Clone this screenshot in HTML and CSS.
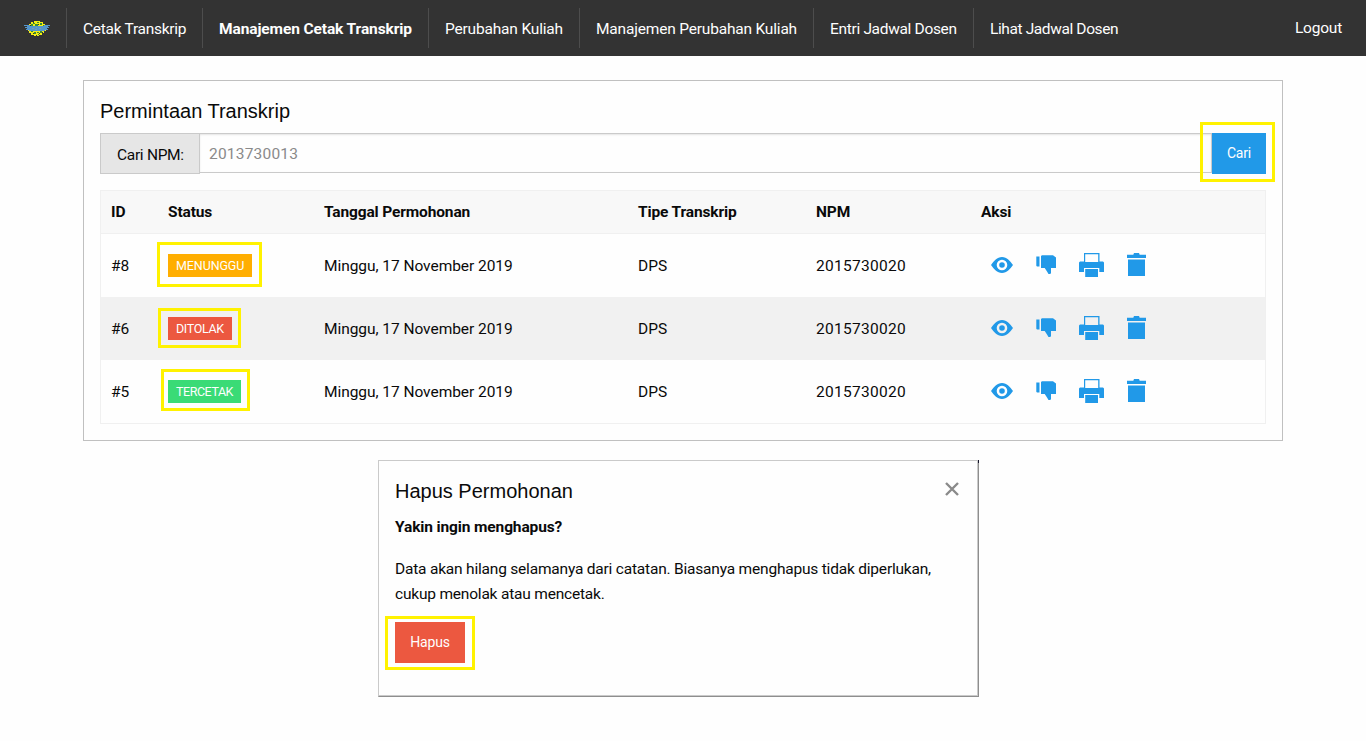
FILE: index.html
```html
<!DOCTYPE html>
<html lang="id">
<head>
<meta charset="utf-8">
<title>Manajemen Cetak Transkrip</title>
<link rel="stylesheet" href="styles.css">
</head>
<body>
<svg class="defs" aria-hidden="true">
  <symbol id="eye" viewBox="0 0 22 16"><path fill-rule="evenodd" d="M0 8C3 4 6 0 11 0s8 4 11 8c-3 4-6 8-11 8S3 12 0 8Zm11-5.300a5.300 5.300 0 1 0 0 10.600a5.300 5.300 0 0 0 0-10.600Zm0 2.500a2.800 2.800 0 1 1 0 5.600a2.800 2.800 0 0 1 0-5.600Z"/></symbol>
  <symbol id="thumb" viewBox="0 0 20 19"><path d="M.3 1.500H3.500V11.500H1L.3 10.800ZM5 1 6 .2H17L20 2.600V13h-5v5l-.7 1h-1.800L11 16.500 8.700 13H5Z"/></symbol>
  <symbol id="printer" viewBox="0 0 25 24"><path fill-rule="evenodd" d="M5 0h15.500v8.500H24l1 1V19h-4.700v-4H5v4H0V9.500l1-1h4ZM6.200 1.200V9h13V1.200ZM6.200 16h12.800v8H6.200Z"/></symbol>
  <symbol id="trash" viewBox="0 0 19 23"><path d="M7 0h5l.7 1.700H19V5H0V1.700h6.300ZM1 6.500H18V23H1Z"/></symbol>
</svg>

<header class="topbar">
  <a class="brand" href="#">
    <svg width="26" height="16" viewBox="0 0 26 16" shape-rendering="crispEdges">
      <path fill="#f5ee12" d="M10 0h6v1h3v2h2v3h1v4h-2v2h-2v2h-3v1h-5v-1H7v-2H5v-2H4V5h1V3h2V1h3Z"/>
      <path fill="#3c8c35" d="M9 2h2v1H9zM13 1h2v1h-2zM16 2h2v2h-2zM11 3h3v2h-3zM7 3h2v2H7zM19 4h1v1h-1zM7 10h2v1H7zM10 11h2v2h-2zM13 11h2v1h-2zM16 10h2v2h-2zM14 13h1v1h-1z"/>
      <path fill="#33382a" d="M9 1h1v1H9zM14 3h1v1h-1zM9 12h1v1H9zM15 12h1v1h-1zM12 14h1v1h-1zM6 4h1v1H6zM18 11h1v1h-1z"/>
      <path fill="#5596cc" d="M0 4h6v1h14V4h6v1h-2v1h1v1h-2v1h1v1h-3v1H5V9H2V8h1V7H1V6h2V5H0Z"/>
      <path fill="#7f9fae" d="M8 7h2v1H8zM12 6h1v1h-1zM11 8h2v1h-2zM15 7h2v1h-2z"/>
    </svg>
  </a>
  <nav class="menu">
    <a class="item w136" href="#">Cetak Transkrip</a>
    <a class="item w226 active" href="#">Manajemen Cetak Transkrip</a>
    <a class="item w151" href="#">Perubahan Kuliah</a>
    <a class="item w234" href="#">Manajemen Perubahan Kuliah</a>
    <a class="item w160" href="#">Entri Jadwal Dosen</a>
    <a class="item w161" href="#">Lihat Jadwal Dosen</a>
  </nav>
  <a class="logout" href="#">Logout</a>
</header>

<main class="card">
  <h1 class="title">Permintaan Transkrip</h1>
  <form class="search">
    <label class="search-label" for="npm">Cari NPM:</label>
    <input class="search-input" id="npm" type="text" placeholder="2013730013">
    <span class="marked"><button class="btn primary" type="button">Cari</button><i class="mark mark-cari"></i></span>
  </form>
  <table class="requests">
    <colgroup><col class="c-id"><col class="c-status"><col class="c-date"><col class="c-type"><col class="c-npm"><col></colgroup>
    <thead>
      <tr><th>ID</th><th>Status</th><th>Tanggal Permohonan</th><th>Tipe Transkrip</th><th>NPM</th><th>Aksi</th></tr>
    </thead>
    <tbody>
      <tr>
        <td>#8</td><td class="cell-badge"><span class="badge waiting">MENUNGGU<i class="mark mark-waiting"></i></span></td><td class="date">Minggu, 17 November 2019</td><td>DPS</td><td class="npm">2015730020</td>
        <td class="cell-actions"><div class="actions"><svg class="eye"><use href="#eye"/></svg><svg class="thumb"><use href="#thumb"/></svg><svg class="printer"><use href="#printer"/></svg><svg class="trash"><use href="#trash"/></svg></div></td>
      </tr>
      <tr>
        <td>#6</td><td class="cell-badge"><span class="badge rejected">DITOLAK<i class="mark mark-rejected"></i></span></td><td class="date">Minggu, 17 November 2019</td><td>DPS</td><td class="npm">2015730020</td>
        <td class="cell-actions"><div class="actions"><svg class="eye"><use href="#eye"/></svg><svg class="thumb"><use href="#thumb"/></svg><svg class="printer"><use href="#printer"/></svg><svg class="trash"><use href="#trash"/></svg></div></td>
      </tr>
      <tr>
        <td>#5</td><td class="cell-badge"><span class="badge printed">TERCETAK<i class="mark mark-printed"></i></span></td><td class="date">Minggu, 17 November 2019</td><td>DPS</td><td class="npm">2015730020</td>
        <td class="cell-actions"><div class="actions"><svg class="eye"><use href="#eye"/></svg><svg class="thumb"><use href="#thumb"/></svg><svg class="printer"><use href="#printer"/></svg><svg class="trash"><use href="#trash"/></svg></div></td>
      </tr>
    </tbody>
  </table>
</main>

<section class="modal">
  <div class="modal-head">
    <h2 class="title">Hapus Permohonan</h2>
    <svg class="close" viewBox="0 0 14 14"><path d="M1 1l12 12M13 1 1 13"/></svg>
  </div>
  <p class="question">Yakin ingin menghapus?</p>
  <p class="detail">Data akan hilang selamanya dari catatan. Biasanya menghapus tidak diperlukan,<br>cukup menolak atau mencetak.</p>
  <span class="marked"><button class="btn alert" type="button">Hapus</button><i class="mark mark-hapus"></i></span>
</section>
</body>
</html>
```
FILE: styles.css
```css
* { box-sizing: border-box; }
body {
  margin: 0;
  background: #fefefe;
  color: #0a0a0a;
  font: 15.5px/24px Roboto, "Open Sans", sans-serif;
}
a { color: inherit; text-decoration: none; }
h1, h2, p { margin: 0; }
.defs { display: none; }

.topbar {
  display: flex;
  align-items: center;
  height: 56px;
  padding-right: 24px;
  background: #333;
  color: #fefefe;
}
.brand { display: flex; width: 66px; padding: 2px 0 0 24px; }
.menu { display: flex; flex: 1; }
.item {
  height: 40px;
  padding-left: 16px;
  border-left: 1px solid #4d4d4d;
  line-height: 42px;
  white-space: nowrap;
}
.w136 { width: 136px; letter-spacing: -.28px; }
.w226 { width: 226px; }
.w151 { width: 151px; letter-spacing: -.18px; }
.w234 { width: 234px; letter-spacing: -.19px; }
.w160 { width: 160px; letter-spacing: -.32px; }
.w161 { width: 161px; letter-spacing: -.39px; }
.active { font-weight: 700; letter-spacing: -.11px; }
.logout { letter-spacing: -.22px; }

.card {
  width: 1200px;
  height: 361px;
  margin: 24px 0 0 83px;
  padding: 16px;
  border: 1px solid #c0c0c0;
}
.title {
  font: 400 20px/28px "Liberation Sans", Arial, sans-serif;
}
.card .title { height: 36px; }

.search { display: flex; height: 41px; margin-bottom: 16px; }
.search-label {
  width: 100px;
  padding-left: 16px;
  border: 1px solid #cacaca;
  background: #e6e6e6;
  line-height: 42px;
  letter-spacing: -.3px;
}
.search-input {
  flex: 1;
  height: 40px;
  margin-left: -1px;
  padding: 2px 9px 0;
  border: 1px solid #cacaca;
  background: #fefefe;
  box-shadow: inset 0 1px 2px rgba(10, 10, 10, .1);
  font: inherit;
  letter-spacing: .2px;
}
.search-input::placeholder { color: #8a8a8a; }

.marked { display: inline-flex; position: relative; }
.mark { position: absolute; border: 3px solid #fff200; }
.btn {
  height: 41px;
  padding: 0;
  border: 0;
  color: #fefefe;
  font: 14px/41px Roboto, "Open Sans", sans-serif;
  letter-spacing: -.2px;
}
.primary { width: 54px; background: #2199e8; }
.alert { width: 70px; background: #ec5840; }
.mark-cari { left: -12px; top: -11px; width: 75px; height: 60px; }
.mark-hapus { left: -10px; top: -6px; width: 90px; height: 54px; }

.requests {
  width: 1166px;
  table-layout: fixed;
  border-collapse: separate;
  border-spacing: 0;
  border: 1px solid #f0f0f0;
}
.c-id { width: 57px; }
.c-status { width: 156px; }
.c-date { width: 314px; }
.c-type { width: 178px; }
.c-npm { width: 165px; }
th, td { padding: 0 10px; text-align: left; white-space: nowrap; }
th { height: 43px; background: #f8f8f8; border-bottom: 1px solid #f0f0f0; letter-spacing: -.14px; }
td { height: 63px; padding-top: 1px; }
tbody tr:nth-child(even) { background: #f1f1f1; }
.date { letter-spacing: -.05px; }
.npm { letter-spacing: .28px; }
.cell-badge { padding-top: 20px; vertical-align: top; }
.badge {
  display: block;
  position: relative;
  height: 23px;
  padding-left: 8px;
  color: #fefefe;
  font-size: 12.5px;
  line-height: 24px;
  letter-spacing: -.1px;
}
.waiting { width: 84px; background: #ffae00; }
.rejected { width: 64px; background: #ec5840; letter-spacing: -.35px; }
.printed { width: 73px; background: #3adb76; letter-spacing: -.45px; }
.mark-waiting { left: -11px; top: -12px; width: 105px; height: 45px; }
.mark-rejected { left: -10px; top: -9px; width: 83px; height: 40px; }
.mark-printed { left: -7px; top: -11px; width: 89px; height: 42px; }

.cell-actions { padding-top: 19px; vertical-align: top; }
.actions { display: flex; align-items: flex-start; padding-left: 10px; fill: #2199e8; }
.eye { width: 22px; height: 16px; margin: 4px 23px 0 0; }
.thumb { width: 20px; height: 19px; margin: 2px 23px 0 0; }
.printer { width: 25px; height: 24px; margin-right: 23px; }
.trash { width: 19px; height: 23px; }

.modal {
  position: relative;
  width: 601px;
  height: 237px;
  margin: 19px 0 0 378px;
  padding: 16px;
  border: 1px solid #cacaca;
  border-right-color: #8e8e8e;
  border-bottom-color: #8e8e8e;
  box-shadow: inset -1px -1px #cacaca;
}
.modal::after {
  content: "";
  position: absolute;
  top: -1px;
  right: -1px;
  width: 1px;
  height: 3px;
  background: #14142a;
}
.modal-head { display: flex; justify-content: space-between; height: 37px; }
.close { width: 14px; height: 14px; margin: 5px 3px 0 0; stroke: #8a8a8a; stroke-width: 2.400; }
.question { height: 42px; font-weight: 700; line-height: 27px; letter-spacing: -.13px; }
.detail { height: 66px; padding-top: 1px; line-height: 25px; letter-spacing: -.2px; white-space: nowrap; }
```
